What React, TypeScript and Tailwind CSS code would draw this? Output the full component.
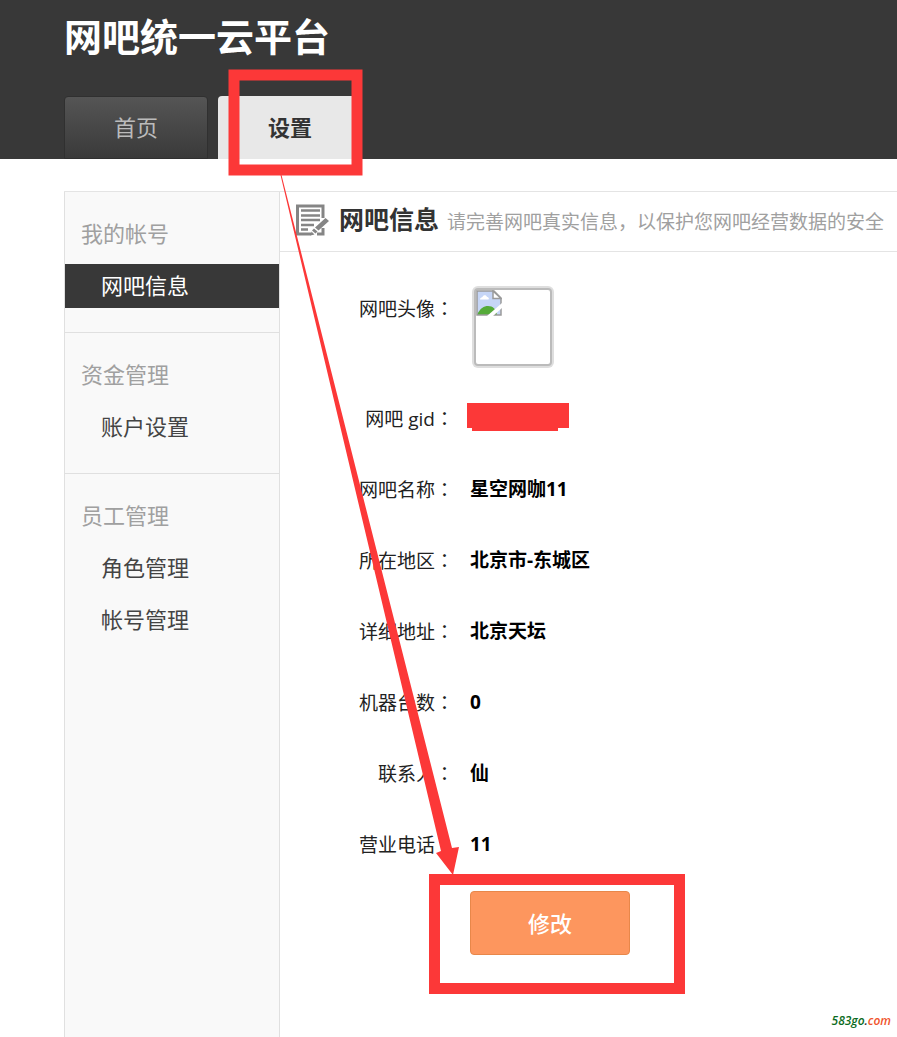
import React from 'react';

const menu = [
    { title: '我的帐号', items: ['网吧信息'] },
    { title: '资金管理', items: ['账户设置'] },
    { title: '员工管理', items: ['角色管理', '帐号管理'] },
];

const fields = [
    { label: '网吧 gid', value: '' },
    { label: '网吧名称', value: '星空网咖11' },
    { label: '所在地区', value: '北京市-东城区' },
    { label: '详细地址', value: '北京天坛' },
    { label: '机器台数', value: '0' },
    { label: '联系人', value: '仙' },
    { label: '营业电话', value: '11' },
];

const Label: React.FC<{ text: string }> = ({ text }) => (
    <dt className="w-[174px] shrink-0 text-right text-[#222]">
        {text}
        <span className="font-['Noto_Sans_CJK_TC',sans-serif]">：</span>
    </dt>
);

const NoteIcon: React.FC = () => (
    <svg className="h-8 w-[33px] shrink-0" viewBox="0 0 33 32" fill="none" aria-hidden="true">
        <path d="M27 14V2H1.500V30H15M27 24V30H21" stroke="#858585" strokeWidth="3" />
        <path d="M5 6.500H24M5 11.500H24M5 16H24M5 21H18M5 25.500H12" stroke="#858585" strokeWidth="2.500" />
        <path d="M29.500 14L33 17L22.500 26.500L19 23.500ZM18 24.500L21.500 27.500L19.500 29.500L16 26.500ZM15.500 27.500L18.500 30.500L14.500 31.500Z" fill="#858585" />
    </svg>
);

const BrokenImage: React.FC = () => (
    <svg className="h-[26px] w-[26px]" viewBox="0 0 26 26" role="img" aria-label="网吧头像">
        <path d="M1 1H18L25 8V25H1Z" fill="#c6d6f7" />
        <path d="M4 9.500C4 7.500 6 7.500 6.500 7C7 4.500 10.500 4.500 11 7C13 7 13.500 9.500 12 9.500Z" fill="#fff" />
        <path d="M1 25C4 18 8 16 12 16C17 16 20 19 21 25Z" fill="#55ab39" />
        <path d="M1 25V1H18L25 8V25Z" fill="none" stroke="#9a9a9a" strokeWidth="1.500" />
        <path d="M17 1V8.500H25Z" fill="#fff" stroke="#9a9a9a" strokeWidth="1.500" />
        <path d="M26 13L11 26H17L26 18Z" fill="#fff" />
    </svg>
);

// Red frames and arrow that lead the reader from the tab to the button
const Annotations: React.FC = () => (
    <svg className="pointer-events-none absolute top-0 left-0 h-[1037px] w-[897px]" viewBox="0 0 897 1037" fill="none" aria-hidden="true">
        <rect x="234" y="75" width="123" height="95" stroke="#fc3838" strokeWidth="11" />
        <rect x="434.500" y="879.500" width="245" height="109" stroke="#fc3838" strokeWidth="11" />
        <path d="M280.500 175L281.500 175L452 848L459 847L453 875L436 853L441 851Z" fill="#fc3838" />
        <path d="M467 403H569V428H558V431H472V428H467Z" fill="#fc3838" />
    </svg>
);

const App: React.FC = () => {
    return (
        <div className="relative flex min-h-screen flex-col overflow-x-hidden bg-white font-['Open_Sans','Noto_Sans_CJK_SC',sans-serif]">
            <header className="bg-[#383838] pl-16">
                <h1 className="h-24 pt-2 text-[38px] leading-[56px] font-bold text-white">网吧统一云平台</h1>
                <nav className="flex gap-[10px] text-[22px]">
                    <a href="#" className="flex h-[63px] w-36 items-center justify-center rounded-t-sm border border-[#303030] bg-linear-to-b from-[#555] to-[#3a3a3a] text-[#bbb]">首页</a>
                    <a href="#" className="flex h-[63px] w-36 items-center justify-center rounded-t-sm bg-[#e8e8e8] font-bold text-[#333]">设置</a>
                </nav>
            </header>

            <div className="mt-8 ml-16 flex flex-1 border-t border-[#e4e4e4]">
                <aside className="w-[216px] shrink-0 border-x border-[#e0e0e0] bg-[#f9f9f9] text-[22px] leading-[42px]">
                    {menu.map((group, i) => (
                        <section key={group.title} className={i < menu.length - 1 ? 'border-b border-[#e0e0e0] pt-5 pb-6' : 'pt-5 pb-6'}>
                            <h2 className="pb-[2px] pl-4 text-[#a0a0a0]">{group.title}</h2>
                            <ul>
                                {group.items.map((item) => (
                                    <li key={item} className="mt-2">
                                        <a href="#" className={item === '网吧信息' ? 'block bg-[#383838] pb-[2px] pl-9 text-white' : 'block pb-[2px] pl-9 text-[#444]'}>{item}</a>
                                    </li>
                                ))}
                            </ul>
                        </section>
                    ))}
                </aside>

                <main className="min-w-0 flex-1">
                    <div className="flex h-[60px] items-center border-b border-[#e4e4e4] pb-1 pl-4 whitespace-nowrap">
                        <NoteIcon />
                        <div className="flex items-baseline gap-2 pl-[10px]">
                            <h2 className="text-[25px] font-bold text-[#333]">网吧信息</h2>
                            <p className="text-[19px] text-[#a0a0a0]">请完善网吧真实信息，以保护您网吧经营数据的安全</p>
                        </div>
                    </div>

                    <dl className="pt-[34px] text-[19px] leading-[27px]">
                        <div className="flex h-[97px] gap-4">
                            <div className="pt-2"><Label text="网吧头像" /></div>
                            <dd className="ml-[2px] h-[82px] w-[82px] rounded-md bg-[#dedede] p-[2px]">
                                <div className="h-full w-full rounded-sm border-2 border-[#bbb] bg-white">
                                    <BrokenImage />
                                </div>
                            </dd>
                        </div>
                        {fields.map((field) => (
                            <div key={field.label} className="flex h-[71px] items-center gap-4">
                                <Label text={field.label} />
                                <dd className="font-bold text-black">{field.value}</dd>
                            </div>
                        ))}
                    </dl>

                    <button type="button" className="mt-[11px] ml-[190px] h-16 w-40 rounded-sm border border-[#e8874a] bg-[#fd965e] text-[22px] font-medium text-white">修改</button>
                </main>
            </div>

            <Annotations />
            <p className="absolute right-[6px] bottom-2 text-[12px] leading-4 font-semibold text-[#0b6b22] italic">
                583go<span className="text-[#333]">.</span><span className="text-[#f0552d]">com</span>
            </p>
        </div>
    );
};

export default App;
